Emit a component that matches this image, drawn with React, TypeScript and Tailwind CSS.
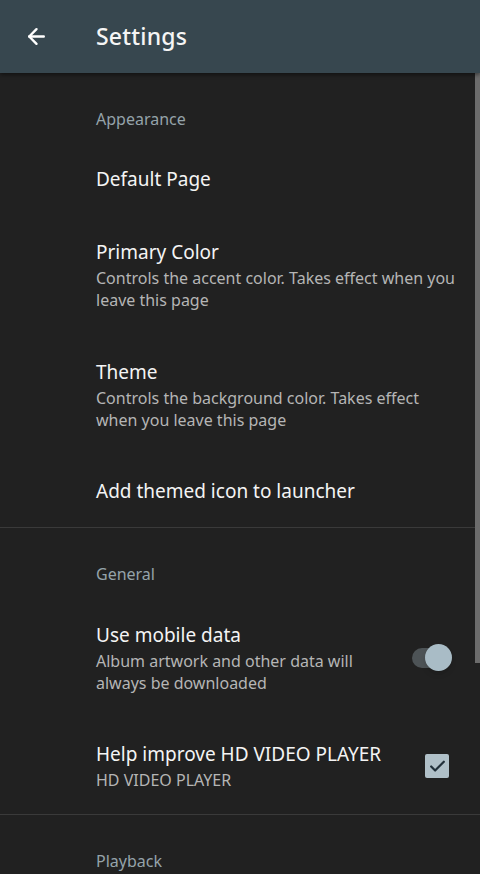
import { ArrowLeft, Check } from "lucide-react"

type Pref = {
  title: string
  summary?: string
  height: string
  control?: "switch" | "check"
}

const appearance: Pref[] = [
  { title: "Default Page", height: "h-[72px]" },
  {
    title: "Primary Color",
    summary: "Controls the accent color. Takes effect when you leave this page",
    height: "h-[120px]",
  },
  {
    title: "Theme",
    summary: "Controls the background color. Takes effect when you leave this page",
    height: "h-[120px]",
  },
  { title: "Add themed icon to launcher", height: "h-[72px]" },
]

const general: Pref[] = [
  {
    title: "Use mobile data",
    summary: "Album artwork and other data will always be downloaded",
    height: "h-[120px]",
    control: "switch",
  },
  {
    title: "Help improve HD VIDEO PLAYER",
    summary: "HD VIDEO PLAYER",
    height: "h-[96px]",
    control: "check",
  },
]

const Category = ({ label }: { label: string }) => (
  <div className="h-[70px] pt-[36px] pl-[96px]">
    <div className="text-[16px] leading-[20px] text-[#95a3aa]">{label}</div>
  </div>
)

const Row = ({ pref }: { pref: Pref }) => (
  <div className={`${pref.height} flex items-center pl-[96px] pr-[18px]`}>
    <div className="flex-1 min-w-0">
      <div className="text-[19px] leading-[26px] text-[#f4f4f4]">{pref.title}</div>
      {pref.summary && (
        <div
          className={`mt-[2px] text-[16px] leading-[22px] text-[#b5b5b5] ${
            pref.control === "switch" ? "max-w-[270px]" : ""
          }`}
        >
          {pref.summary}
        </div>
      )}
    </div>
    {pref.control === "switch" && (
      <div className="relative w-[40px] h-[28px] ml-4 mr-[10px] flex items-center">
        <div className="w-[34px] h-[20px] rounded-full bg-[#4d5356]" />
        <div className="absolute right-0 top-0 w-[27px] h-[27px] rounded-full bg-[#a9bcc6] shadow-md" />
      </div>
    )}
    {pref.control === "check" && (
      <div className="w-[24px] h-[24px] ml-4 mr-[13px] rounded-[2px] bg-[#b0c0c8] flex items-center justify-center">
        <Check className="w-[19px] h-[19px] text-[#22303a]" strokeWidth={2.8} />
      </div>
    )}
  </div>
)

export default function App() {
  return (
    <div
      className="relative w-[480px] h-[874px] overflow-hidden bg-[#212121]"
      style={{ fontFamily: '"Noto Sans", "Open Sans", sans-serif' }}
    >
      {/* Toolbar */}
      <div className="relative z-10 h-[73px] bg-[#37474f] flex items-center shadow-[0_2px_4px_rgba(0,0,0,0.45)]">
        <button className="w-[72px] h-full flex items-center justify-center text-white">
          <ArrowLeft className="w-[25px] h-[25px]" strokeWidth={2.3} />
        </button>
        <h1 className="ml-[24px] text-[23px] font-medium text-[#f5f5f5] tracking-[0.2px]">Settings</h1>
      </div>

      <div>
        <Category label="Appearance" />
        {appearance.map((p) => (
          <Row key={p.title} pref={p} />
        ))}
        <div className="h-px bg-[#3a3a3a]" />
        <Category label="General" />
        {general.map((p) => (
          <Row key={p.title} pref={p} />
        ))}
        <div className="h-px bg-[#3a3a3a]" />
        <Category label="Playback" />
      </div>

      {/* scrollbar */}
      <div className="absolute right-0 top-[73px] w-[5px] h-[590px] bg-[#6c6c6c]" />
    </div>
  )
}
